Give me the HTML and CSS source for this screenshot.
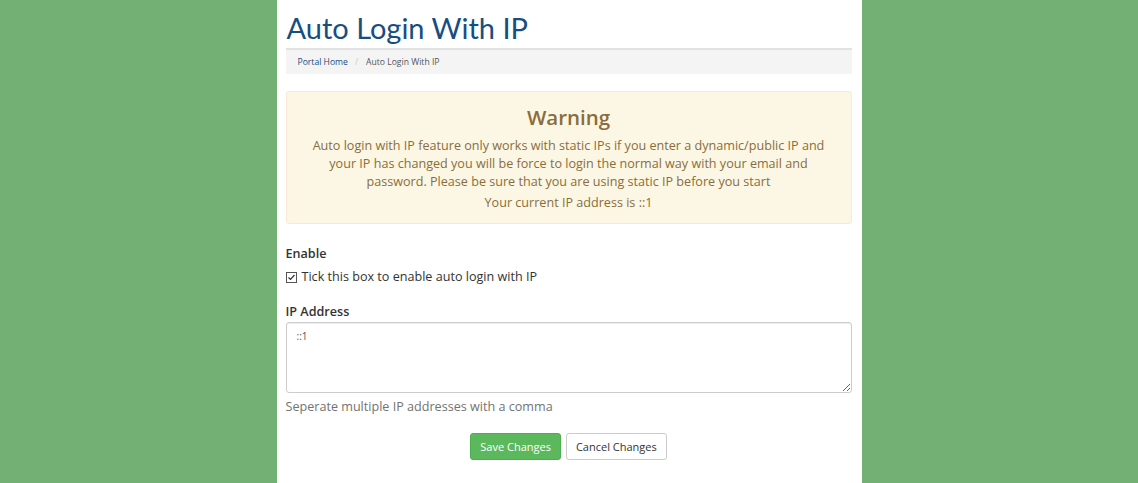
FILE: index.html
```html
<!DOCTYPE html>
<html>

<head>
    <title>Auto Login With IP</title>
    <link rel="stylesheet" href="styles.css">
</head>

<body>
    <div class="page">
        <h1 class="page-title">Auto Login With IP</h1>

        <ol class="breadcrumb">
            <li><a href="#">Portal Home</a></li>
            <li class="active">Auto Login With IP</li>
        </ol>

        <div class="alert-warning">
            <h2>Warning</h2>
            <p>Auto login with IP feature only works with static IPs if you enter a dynamic/public IP and<br>your IP has
                changed you will be force to login the normal way with your email and<br>password. Please be sure that
                you are using static IP before you start</p>
            <p class="current-ip">Your current IP address is ::1</p>
        </div>

        <form class="ip-form">
            <div class="form-group">
                <label class="control-label">Enable</label>
                <label class="checkbox-label">
                    <svg class="check-icon" width="11" height="11" viewBox="0 0 11 11">
                        <rect x="0.5" y="0.5" width="10" height="10" fill="#fff" stroke="#555" />
                        <path d="M2.5 5.5 L4.5 7.5 L8.5 3" fill="none" stroke="#333" stroke-width="1.2" />
                    </svg>
                    Tick this box to enable auto login with IP
                </label>
            </div>

            <div class="form-group">
                <label class="control-label" for="ipAddress">IP Address</label>
                <textarea id="ipAddress" class="form-control">::1</textarea>
                <p class="help-block">Seperate multiple IP addresses with a comma</p>
            </div>

            <div class="form-actions">
                <button type="button" class="btn btn-save">Save Changes</button>
                <button type="button" class="btn btn-cancel">Cancel Changes</button>
            </div>
        </form>
    </div>
</body>

</html>
```

FILE: styles.css
```css
/* Auto login with IP page */
body {
    margin: 0;
    background-color: #72b073;
    font-family: "Open Sans", sans-serif;
    font-size: 12.6px;
    color: #333;
}

.page {
    width: 566px;
    margin: 0 auto;
    padding: 0 10px 22px 9px;
    background-color: #fff;
    height: 461px;
}

.page-title {
    margin: 0;
    padding: 10px 0 2px 1px;
    font-family: Lato, sans-serif;
    font-weight: 400;
    font-size: 29px;
    line-height: 36px;
    color: #174e80;
    border-bottom: 2px solid #e2e2e2;
}

.breadcrumb {
    list-style: none;
    margin: 0;
    padding: 0 12px;
    height: 24px;
    display: flex;
    align-items: center;
    background-color: #f4f4f4;
    font-size: 8.6px;
    color: #555;
}

.breadcrumb li + li:before {
    content: "/";
    padding: 0 8px 0 7px;
    color: #ccc;
}

.breadcrumb a {
    color: #174e80;
    text-decoration: none;
}

.alert-warning {
    margin-top: 17px;
    padding: 11px 15px 12px;
    background-color: #fcf7e4;
    border: 1px solid #f7ead0;
    border-radius: 3px;
    color: #8a6d3b;
    text-align: center;
    height: 108px;
}

.alert-warning h2 {
    margin: 0;
    font-size: 20.5px;
    font-weight: 600;
    line-height: 28px;
}

.alert-warning p {
    margin: 6px 0 0;
    line-height: 18px;
}

.alert-warning .current-ip {
    margin-top: 3px;
}

.form-group {
    margin-top: 20px;
}

.form-group + .form-group {
    margin-top: 15px;
}

.control-label {
    display: block;
    font-weight: 600;
    line-height: 20px;
    color: #333;
}

.checkbox-label {
    display: flex;
    align-items: center;
    gap: 5px;
    margin-top: 3px;
    line-height: 20px;
}

.form-control {
    display: block;
    box-sizing: border-box;
    width: 100%;
    height: 71px;
    margin: 0;
    padding: 6px 10px;
    border: 1px solid #ccc;
    border-radius: 3px;
    box-shadow: inset 0 1px 1px rgba(0, 0, 0, 0.075);
    font-family: "Open Sans", sans-serif;
    font-size: 10px;
    color: #555;
}

.help-block {
    margin: 4px 0 0;
    line-height: 20px;
    color: #737373;
}

.form-actions {
    margin-top: 16px;
    display: flex;
    justify-content: center;
    gap: 5px;
}

.btn {
    height: 27px;
    padding: 0 9px;
    border-radius: 3px;
    font-family: "Open Sans", sans-serif;
    font-size: 11px;
    cursor: pointer;
}

.btn-save {
    background-color: #5cb85c;
    border: 1px solid #4cae4c;
    color: #fff;
}

.btn-cancel {
    background-color: #fff;
    border: 1px solid #ccc;
    color: #333;
}
```
